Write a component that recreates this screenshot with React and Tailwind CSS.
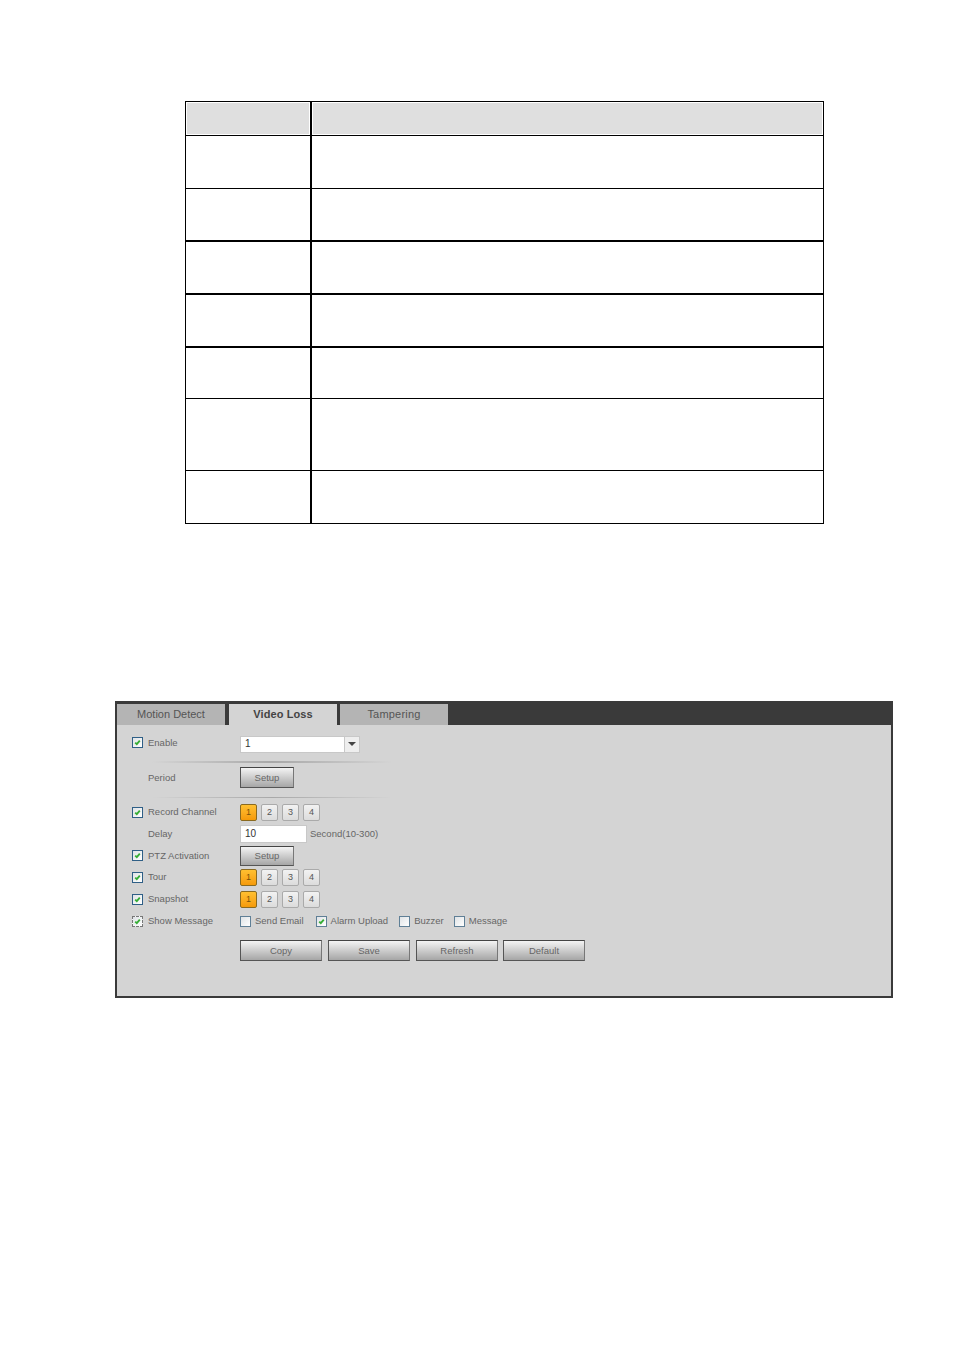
function Check({ on = true, dashed = false, soft = false }) {
  return (
    <span className={`flex h-[11px] w-[11px] shrink-0 items-center justify-center border bg-gradient-to-br from-[#dfe3e6] to-[#ffffff] ${dashed ? "border-dashed border-[#777777]" : soft ? "border-[#5f7f96]" : "border-[#2f5f86]"}`}>
      {on && (
        <svg width="7" height="7" viewBox="0 0 7 7" fill="none">
          <path d="M1.2 3.6 L2.8 5.2 L5.8 1.6" stroke="#35ad35" strokeWidth="1.8" />
        </svg>
      )}
    </span>
  );
}

function Label({ children, className = "" }) {
  return <span className={`text-[9.5px] leading-none text-[#666666] ${className}`}>{children}</span>;
}

function Row({ check, dashed, label, h, left = "", children }) {
  return (
    <div className={`flex items-center ${h}`}>
      <div className={`flex w-[108px] shrink-0 items-center gap-[5px] ${left}`}>
        {check ? <Check dashed={dashed} /> : <span className="w-[11px]" />}
        <Label>{label}</Label>
      </div>
      {children}
    </div>
  );
}

function Num({ n, active }) {
  return (
    <span className={`flex h-[17px] w-[17px] items-center justify-center rounded-[2px] border text-[9px] leading-none ${active ? "border-[#8a6a20] bg-gradient-to-b from-[#ffc030] to-[#f59a08] text-[#7a5208]" : "border-[#aaaaaa] bg-gradient-to-b from-[#f2f2f2] to-[#dcdcdc] text-[#555555]"}`}>
      {n}
    </span>
  );
}

function Nums() {
  return (
    <div className="flex gap-[4px]">
      <Num n="1" active />
      <Num n="2" />
      <Num n="3" />
      <Num n="4" />
    </div>
  );
}

function Btn({ children, w, h = "h-[21px]" }) {
  return (
    <button className={`flex ${w} ${h} items-center justify-center border border-t-[#444444] border-l-[#555555] border-r-[#777777] border-b-[#555555] bg-gradient-to-b from-[#f4f4f4] to-[#a6a6a6] text-[9.5px] leading-none text-[#666666]`}>
      {children}
    </button>
  );
}

function Opt({ on, children, mr = "mr-[11px]" }) {
  return (
    <div className={`flex items-center gap-[4px] ${mr}`}>
      <Check on={on} soft />
      <Label>{children}</Label>
    </div>
  );
}

function Divider({ h }) {
  return <div className={`ml-[20px] w-[240px] bg-gradient-to-r from-transparent via-[#a8a8a8] to-transparent ${h}`} />;
}

const rows = [
  ["h-[53px]", "border-b"],
  ["h-[53px]", "border-b-2"],
  ["h-[53px]", "border-b-2"],
  ["h-[53px]", "border-b-2"],
  ["h-[51px]", "border-b"],
  ["h-[72px]", "border-b"],
  ["h-[52px]", ""],
];

export default function App() {
  return (
    <div className="h-[1350px] w-[954px] overflow-hidden bg-white pt-[101px] font-['Liberation_Sans',sans-serif]">
      <div className="ml-[185px] w-[639px] border border-black">
        <div className="flex h-[34px] border-b border-black">
          <div className="w-[126px] border-r-2 border-black p-[1px]">
            <div className="h-full bg-[#dfdfdf]" />
          </div>
          <div className="flex-1 p-[1px]">
            <div className="h-full bg-[#dfdfdf]" />
          </div>
        </div>
        {rows.map(([h, b], i) => (
          <div key={i} className={`flex border-black ${h} ${b}`}>
            <div className="w-[126px] border-r-2 border-black" />
            <div className="flex-1" />
          </div>
        ))}
      </div>

      <div className="ml-[115px] mt-[177px] h-[297px] w-[778px] border-2 border-t-0 border-[#3a3a3a] bg-[#d4d4d4]">
        <div className="flex h-[24px] bg-[#3a3a3a] pt-[3px]">
          <div className="flex w-[108px] items-center justify-center bg-[#b4b4b4] text-[11px] leading-none text-[#555555]">Motion Detect</div>
          <div className="ml-[4px] flex w-[108px] items-center justify-center bg-[#d4d4d4] text-[11px] font-bold leading-none tracking-[0.1px] text-[#444444]">Video Loss</div>
          <div className="ml-[3px] flex w-[108px] items-center justify-center bg-[#b4b4b4] text-[11px] leading-none tracking-[0.2px] text-[#555555]">Tampering</div>
        </div>
        <div className="pl-[15px] pt-[11px]">
          <Row check label="Enable" h="h-[16px]" left="-mt-[3px]">
            <div className="flex h-[17px] w-[120px] items-center border border-[#c8c8c8] bg-white">
              <span className="flex-1 pl-[4px] text-[10px] leading-none text-[#333333]">1</span>
              <span className="flex h-full w-[15px] items-center justify-center border-l border-[#c8c8c8] bg-[#eeeeee]">
                <span className="h-0 w-0 border-x-[4px] border-t-[4px] border-x-transparent border-t-[#444444]" />
              </span>
            </div>
          </Row>
          <div className="h-[9px]" />
          <Divider h="h-[2px]" />
          <div className="h-[4px]" />
          <Row label="Period" h="h-[21px]">
            <Btn w="w-[54px]">Setup</Btn>
          </Row>
          <div className="h-[9px]" />
          <Divider h="h-[1px]" />
          <div className="h-[5px]" />
          <Row check label="Record Channel" h="h-[18px]">
            <Nums />
          </Row>
          <div className="h-[4px]" />
          <Row label="Delay" h="h-[18px]">
            <div className="flex h-[18px] w-[67px] items-center border border-[#c8c8c8] bg-white pl-[4px] text-[10px] leading-none text-[#333333]">10</div>
            <Label className="ml-[3px]">Second(10-300)</Label>
          </Row>
          <div className="h-[3px]" />
          <Row check label="PTZ Activation" h="h-[20px]" left="-mt-[1px]">
            <Btn w="w-[54px]" h="h-[20px]">Setup</Btn>
          </Row>
          <div className="h-[2px]" />
          <Row check label="Tour" h="h-[18px]">
            <Nums />
          </Row>
          <div className="h-[4px]" />
          <Row check label="Snapshot" h="h-[18px]">
            <Nums />
          </Row>
          <div className="h-[6px]" />
          <Row check dashed label="Show Message" h="h-[14px]">
            <Opt on={false} mr="mr-[12px]">Send Email</Opt>
            <Opt on>Alarm Upload</Opt>
            <Opt on={false} mr="mr-[10px]">Buzzer</Opt>
            <Opt on={false}>Message</Opt>
          </Row>
          <div className="ml-[108px] mt-[12px] flex">
            <Btn w="w-[82px]">Copy</Btn>
            <div className="w-[6px]" />
            <Btn w="w-[82px]">Save</Btn>
            <div className="w-[6px]" />
            <Btn w="w-[82px]">Refresh</Btn>
            <div className="w-[5px]" />
            <Btn w="w-[82px]">Default</Btn>
          </div>
        </div>
      </div>
    </div>
  );
}
